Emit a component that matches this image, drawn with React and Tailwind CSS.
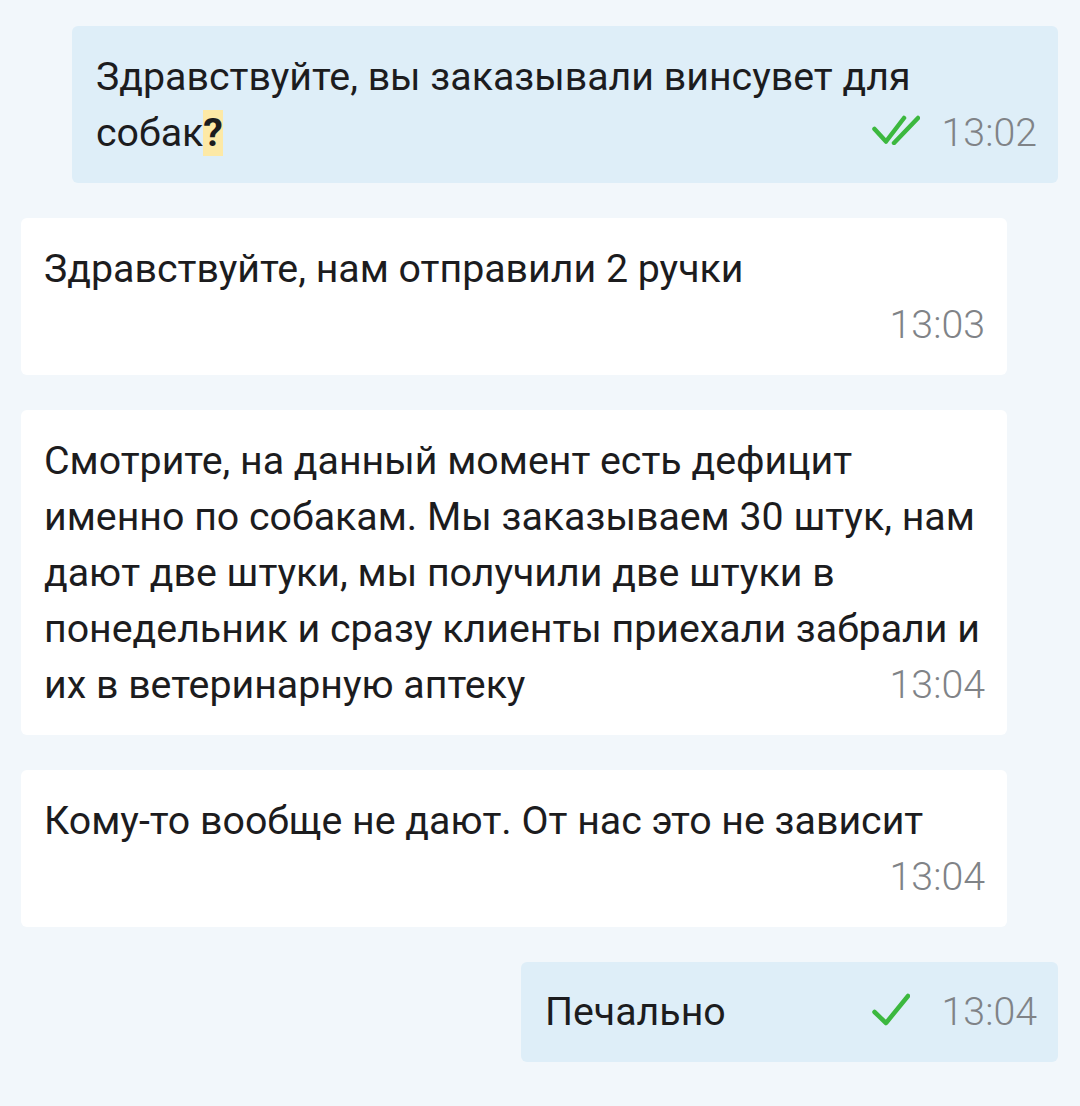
const DoubleCheck = () => (
  <svg width="48" height="30" viewBox="0 0 48 30" fill="none" className="mb-[6px] block">
    <path d="M2.5 14 L14 26.5 L32 3" stroke="#3cb83f" strokeWidth="4.5" strokeLinecap="round" strokeLinejoin="round" />
    <path d="M22 28 L46 3" stroke="#3cb83f" strokeWidth="4.5" strokeLinecap="round" />
  </svg>
);

const SingleCheck = () => (
  <svg width="38" height="33" viewBox="0 0 38 33" fill="none" className="mb-[6px] block">
    <path d="M2.5 19 L14 30 L36 3" stroke="#3cb83f" strokeWidth="4.5" strokeLinecap="round" strokeLinejoin="round" />
  </svg>
);

const Time = ({ children }) => (
  <span className="font-light text-[#808387]">{children}</span>
);

// status block that sits on the last text line (check + time)
const Meta = ({ check, time }) => (
  <span className="float-right ml-4 flex h-[56px] items-center gap-[22px]">
    {check}
    <Time>{time}</Time>
  </span>
);

const Incoming = ({ children }) => (
  <div className="w-[986px] self-start rounded-[6px] bg-white py-[22.5px] pl-[23px] pr-[22px]">
    {children}
  </div>
);

export default function App() {
  return (
    <div
      className="flex min-h-[1106px] flex-col gap-[35px] bg-[#f2f7fb] pb-[46px] pl-[21px] pr-[22px] pt-[26px] text-[39.3px] leading-[56px] text-[#1c1c1e]"
      style={{ fontFamily: "Roboto, 'Noto Sans', sans-serif" }}
    >
      <div className="w-[986px] self-end rounded-[6px] bg-[#deeef8] py-[22.5px] pl-[24px] pr-[21px]">
        <p>
          Здравствуйте, вы заказывали винсувет для собак
          <span className="bg-[#fde9a6] font-bold">?</span>
          <Meta check={<DoubleCheck />} time="13:02" />
        </p>
      </div>

      <Incoming>
        <p>Здравствуйте, нам отправили 2 ручки</p>
        <div className="flex justify-end">
          <Time>13:03</Time>
        </div>
      </Incoming>

      <Incoming>
        <p>
          Смотрите, на данный момент есть дефицит именно по собакам. Мы
          заказываем 30 штук, нам дают две штуки, мы получили две штуки в
          понедельник и сразу клиенты приехали забрали и их в ветеринарную
          аптеку
          <Meta time="13:04" />
        </p>
      </Incoming>

      <Incoming>
        <p>Кому-то вообще не дают. От нас это не зависит</p>
        <div className="flex justify-end">
          <Time>13:04</Time>
        </div>
      </Incoming>

      <div className="flex w-[537px] items-center self-end rounded-[6px] bg-[#deeef8] py-[22px] pl-[24px] pr-[21px]">
        <span>Печально</span>
        <span className="ml-auto flex items-center gap-[32px]">
          <SingleCheck />
          <Time>13:04</Time>
        </span>
      </div>
    </div>
  );
}
